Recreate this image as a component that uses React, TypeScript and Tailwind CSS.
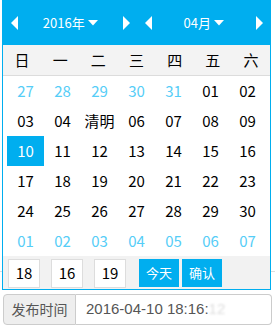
import React from "react";

const BLUE = "#00aeef";

type Cell = { t: string; other?: boolean; sel?: boolean };

const rows: Cell[][] = [
  [
    { t: "27", other: true },
    { t: "28", other: true },
    { t: "29", other: true },
    { t: "30", other: true },
    { t: "31", other: true },
    { t: "01" },
    { t: "02" },
  ],
  [{ t: "03" }, { t: "04" }, { t: "清明" }, { t: "06" }, { t: "07" }, { t: "08" }, { t: "09" }],
  [{ t: "10", sel: true }, { t: "11" }, { t: "12" }, { t: "13" }, { t: "14" }, { t: "15" }, { t: "16" }],
  [{ t: "17" }, { t: "18" }, { t: "19" }, { t: "20" }, { t: "21" }, { t: "22" }, { t: "23" }],
  [{ t: "24" }, { t: "25" }, { t: "26" }, { t: "27" }, { t: "28" }, { t: "29" }, { t: "30" }],
  [
    { t: "01", other: true },
    { t: "02", other: true },
    { t: "03", other: true },
    { t: "04", other: true },
    { t: "05", other: true },
    { t: "06", other: true },
    { t: "07", other: true },
  ],
];

const weekdays = ["日", "一", "二", "三", "四", "五", "六"];

function Left() {
  return (
    <svg width="7" height="14" viewBox="0 0 7 14">
      <polygon points="7,0 7,14 0,7" fill="#fff" />
    </svg>
  );
}
function Right() {
  return (
    <svg width="7" height="14" viewBox="0 0 7 14">
      <polygon points="0,0 0,14 7,7" fill="#fff" />
    </svg>
  );
}
function Caret() {
  return (
    <svg width="10" height="6" viewBox="0 0 10 6" className="ml-[3px]">
      <polygon points="0,0 10,0 5,5.5" fill="#fff" />
    </svg>
  );
}

function HeaderHalf({ label }: { label: string }) {
  return (
    <div className="flex-1 flex items-center justify-between pl-[8px] pr-[7px]">
      <Left />
      <div className="flex items-center text-white text-[13px]">
        <span>{label}</span>
        <Caret />
      </div>
      <Right />
    </div>
  );
}

export default function App() {
  return (
    <div
      className="relative w-[275px] h-[329px] bg-white overflow-hidden"
      style={{ fontFamily: '"Noto Sans CJK SC", "Noto Sans", sans-serif' }}
    >
      {/* background content */}
      <div className="absolute left-0 right-0 top-[271px] h-px bg-[#dddddd]" />
      <div className="pt-[294px] pl-[3px] pr-[3px]">
        <div className="flex h-[31px] w-[269px]">
          <div className="w-[73px] flex items-center justify-center bg-[#eeeeee] border border-[#cccccc] rounded-l-[4px] text-[14px] text-[#555555]">
            发布时间
          </div>
          <div
            className="flex-1 flex items-center pl-[10px] border border-l-0 border-[#cccccc] rounded-r-[4px] text-[15px] text-[#555555]"
            style={{ fontFamily: '"Liberation Sans", Arial, sans-serif' }}
          >
            <span>2016-04-10 18:16:</span>
            <span className="text-[#dddddd] blur-[1px]">12</span>
          </div>
        </div>
      </div>

      {/* calendar popup */}
      <div className="absolute left-[2px] top-0 w-[269px] border border-[#00aeef] bg-white">
        <div className="flex h-[44px] bg-[#00aeef]">
          <HeaderHalf label="2016年" />
          <HeaderHalf label="04月" />
        </div>
        <div className="grid grid-cols-7 h-[31px] bg-[#f3f3f3] border-b border-[#dcdcdc] text-[15px] text-black">
          {weekdays.map((w) => (
            <div key={w} className="flex items-center justify-center">
              {w}
            </div>
          ))}
        </div>
        <div className="px-[4px]">
          {rows.map((r, i) => (
            <div key={i} className="grid grid-cols-7 h-[30px]">
              {r.map((c, j) => (
                <div
                  key={j}
                  className={
                    "flex items-center justify-center text-[15px] " +
                    (c.sel
                      ? "bg-[#00aeef] text-white"
                      : c.other
                      ? "text-[#55cdf7]"
                      : "text-black")
                  }
                >
                  {c.t}
                </div>
              ))}
            </div>
          ))}
        </div>
        <div className="flex items-start h-[33px] pt-[3px] pl-[5px] bg-[#f2f2f2]">
          {["18", "16", "19"].map((v, i) => (
            <div
              key={i}
              className="w-[32px] h-[29px] mr-[11px] flex items-center justify-center bg-white border border-[#dddddd] text-[15px] text-black"
            >
              {v}
            </div>
          ))}
          <div className="ml-[2px] w-[40px] h-[28px] flex items-center justify-center bg-[#00aeef] text-white text-[13px]">
            今天
          </div>
          <div className="ml-[3px] w-[40px] h-[28px] flex items-center justify-center bg-[#00aeef] text-white text-[13px]">
            确认
          </div>
        </div>
      </div>
    </div>
  );
}
